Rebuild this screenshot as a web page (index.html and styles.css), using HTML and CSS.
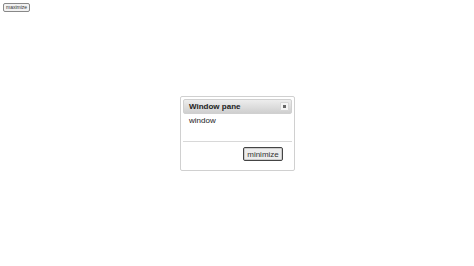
FILE: index.html
```html
<!DOCTYPE html>
<html lang="en">
<head>
    <meta charset="UTF-8">
    <title>Window pane</title>
    <link rel="stylesheet" href="styles.css">
</head>
<body>
    <button class="max-btn" id="maximize">maximize</button>

    <div class="dialog" id="dialog">
        <div class="titlebar">
            <span class="title">Window pane</span>
            <button class="close-btn" title="close"><span class="close-icon"></span></button>
        </div>
        <div class="content">window</div>
        <div class="buttonpane">
            <button class="min-btn" id="minimize">minimize</button>
        </div>
    </div>
</body>
</html>
```

FILE: styles.css
```css
*
{
    margin: 0;
    padding: 0;
    box-sizing: border-box;
}

body
{
    padding: 3px;
    font-family: "Liberation Sans", Arial, sans-serif;
    background-color: #fff;
    color: #222;
}

.max-btn
{
    display: block;
    height: 9px;
    padding: 0 2px;
    font-family: "Liberation Sans", Arial, sans-serif;
    font-size: 5px;
    line-height: 7px;
    color: #333;
    background-color: #f2f2f2;
    border: 1px solid #888;
    border-radius: 2px;
}

/* Dialog window */
.dialog
{
    position: fixed;
    left: 180px;
    top: 96px;
    width: 115px;
    height: 75px;
    padding: 2px;
    border: 1px solid #d0d0d0;
    border-radius: 2px;
    background-color: #fff;
    display: flex;
    flex-direction: column;
}

.titlebar
{
    height: 15px;
    padding: 0 2px 0 5px;
    display: flex;
    align-items: center;
    justify-content: space-between;
    border: 1px solid #d0d0d0;
    border-radius: 2px;
    background: linear-gradient(#ededed, #cfcfcf);
}

.title
{
    font-size: 8px;
    font-weight: bold;
    color: #222;
}

.close-btn
{
    width: 9px;
    height: 9px;
    display: flex;
    align-items: center;
    justify-content: center;
    background-color: #f4f4f4;
    border: 1px solid #d6d6d6;
    border-radius: 1px;
}

.close-icon
{
    width: 3px;
    height: 3px;
    background-color: #666;
}

.content
{
    flex: 1;
    padding: 2px 6px;
    font-size: 8px;
    color: #222;
}

.buttonpane
{
    height: 27px;
    padding: 5px 9px 0 0;
    display: flex;
    justify-content: flex-end;
    align-items: flex-start;
    border-top: 1px solid #d8d8d8;
}

.min-btn
{
    width: 40px;
    height: 14px;
    font-family: "Liberation Sans", Arial, sans-serif;
    font-size: 8px;
    color: #333;
    background-color: #ececec;
    border: 1px solid #444;
    border-radius: 2px;
    box-shadow: inset 0 0 0 1px #ccc;
}
```
